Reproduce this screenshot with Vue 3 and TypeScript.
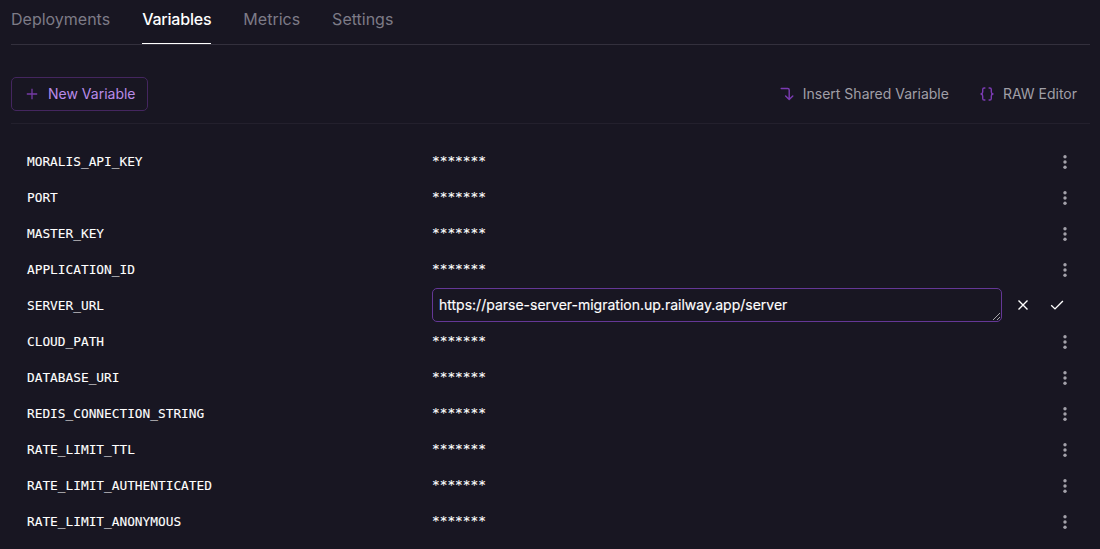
<script setup lang="ts">
interface Variable {
  name: string
  value?: string
}

const tabs: string[] = ['Deployments', 'Variables', 'Metrics', 'Settings']
const activeTab = 'Variables'

const variables: Variable[] = [
  { name: 'MORALIS_API_KEY' },
  { name: 'PORT' },
  { name: 'MASTER_KEY' },
  { name: 'APPLICATION_ID' },
  { name: 'SERVER_URL', value: 'https://parse-server-migration.up.railway.app/server' },
  { name: 'CLOUD_PATH' },
  { name: 'DATABASE_URI' },
  { name: 'REDIS_CONNECTION_STRING' },
  { name: 'RATE_LIMIT_TTL' },
  { name: 'RATE_LIMIT_AUTHENTICATED' },
  { name: 'RATE_LIMIT_ANONYMOUS' },
]
</script>

<template>
  <main class="panel">
    <nav class="tabs">
      <a v-for="tab in tabs" :key="tab" class="tab" :class="{ active: tab === activeTab }">{{ tab }}</a>
    </nav>

    <header class="toolbar">
      <button class="new-variable">
        <svg class="plus" width="12" height="12" viewBox="0 0 12 12"><path d="M6 .8v10.4M.8 6h10.4" /></svg>
        <span>New Variable</span>
      </button>
      <div class="actions">
        <button class="action insert">
          <svg width="14" height="14" viewBox="0 0 14 14"><path d="M1.2 1.5h6.6q1.4 0 1.4 1.4v9.3M5.6 9l3.6 3.4L12.8 9" /></svg>
          <span>Insert Shared Variable</span>
        </button>
        <button class="action raw">
          <svg width="14" height="14" viewBox="0 0 14 14"><path d="M4.9 1h-.7q-1.5 0-1.5 1.6v2.5Q2.7 6.7 1 7q1.7.3 1.7 1.9v2.5q0 1.6 1.5 1.6h.7M9.1 1h.7q1.5 0 1.5 1.6v2.5q0 1.6 1.7 1.9-1.7.3-1.7 1.9v2.5q0 1.6-1.5 1.6h-.7" /></svg>
          <span>RAW Editor</span>
        </button>
      </div>
    </header>

    <ul class="list">
      <li v-for="item in variables" :key="item.name" class="row">
        <span class="name">{{ item.name }}</span>
        <template v-if="item.value">
          <div class="field">
            <span>{{ item.value }}</span>
            <svg class="grip" width="9" height="9" viewBox="0 0 9 9"><path d="M1 8 8 1M5 8l3-3" /></svg>
          </div>
          <div class="confirm">
            <svg width="12" height="12" viewBox="0 0 12 12"><path d="m1.5 1.5 9 9m0-9-9 9" /></svg>
            <svg width="14" height="12" viewBox="0 0 14 12"><path d="m1.2 6.3 3.8 3.6 7.9-7.8" /></svg>
          </div>
        </template>
        <template v-else>
          <span class="mask">*******</span>
          <svg class="menu" width="4" height="14" viewBox="0 0 4 14">
            <circle cx="2" cy="1.7" r="1.7" />
            <circle cx="2" cy="7" r="1.7" />
            <circle cx="2" cy="12.3" r="1.7" />
          </svg>
        </template>
      </li>
    </ul>
  </main>
</template>

<style>
html,
body {
  background: #181622;
}
</style>

<style scoped>
.panel {
  box-sizing: border-box;
  height: 549px;
  padding: 0 10px 0 11px;
  overflow: hidden;
  background: #181622;
  color: #fff;
  font-family: Inter, "Liberation Sans", sans-serif;
}

.tabs {
  display: flex;
  gap: 32px;
  height: 44px;
  border-bottom: 1px solid #33303d;
}

.tab {
  box-sizing: border-box;
  height: 44px;
  padding-top: 7px;
  font-size: 16px;
  line-height: 24px;
  color: #7d7b87;
}

.tab.active {
  color: #fff;
  font-weight: 500;
  letter-spacing: -0.2px;
  border-bottom: 1px solid #fff;
}

.toolbar {
  display: flex;
  align-items: center;
  justify-content: space-between;
  box-sizing: border-box;
  height: 79px;
  padding: 20px 0 0;
  border-bottom: 1px solid #23202d;
}

button {
  display: flex;
  align-items: center;
  padding: 0;
  border: 0;
  background: none;
  font: inherit;
  font-size: 14px;
  line-height: 20px;
  white-space: nowrap;
}

svg {
  display: block;
  flex: none;
  fill: none;
}

.new-variable {
  box-sizing: border-box;
  width: 137px;
  height: 34px;
  padding-left: 14px;
  gap: 10px;
  border: 1px solid #44265f;
  border-radius: 5px;
  color: #b98be8;
}

.plus {
  stroke: #743ba5;
  stroke-width: 1.3;
}

.actions {
  display: flex;
  gap: 31px;
  padding-right: 13px;
}

.action {
  gap: 9px;
  color: #a09fa7;
}

.action svg {
  stroke: #7b3bb3;
  stroke-width: 1.4;
  stroke-linecap: round;
  stroke-linejoin: round;
}

.list {
  margin: 0;
  padding: 20px 0 0;
  list-style: none;
}

.row {
  display: grid;
  grid-template-columns: 405px 570px 1fr;
  align-items: center;
  height: 36px;
  padding-left: 16px;
}

.name,
.mask {
  font-family: "DejaVu Sans Mono", "Liberation Mono", monospace;
  font-size: 12.8px;
  line-height: 18px;
  -webkit-text-stroke: 0.1px currentColor;
}

.mask {
  padding-bottom: 2px;
}

.menu {
  justify-self: end;
  margin-right: 23px;
}

.menu circle {
  fill: #a3a1aa;
}

.field {
  position: relative;
  box-sizing: border-box;
  display: flex;
  align-items: center;
  height: 34px;
  margin-bottom: 2px;
  padding-left: 6px;
  border: 1px solid #643796;
  border-radius: 5px;
  font-size: 14px;
  line-height: 20px;
  -webkit-text-stroke: 0.15px currentColor;
}

.grip {
  position: absolute;
  right: 0;
  bottom: 0;
  stroke: #b5b4b9;
  stroke-width: 0.9;
}

.confirm {
  display: flex;
  align-items: center;
  gap: 21px;
  padding: 0 0 2px 15px;
}

.confirm svg {
  stroke: #fff;
  stroke-width: 1.4;
}
</style>
